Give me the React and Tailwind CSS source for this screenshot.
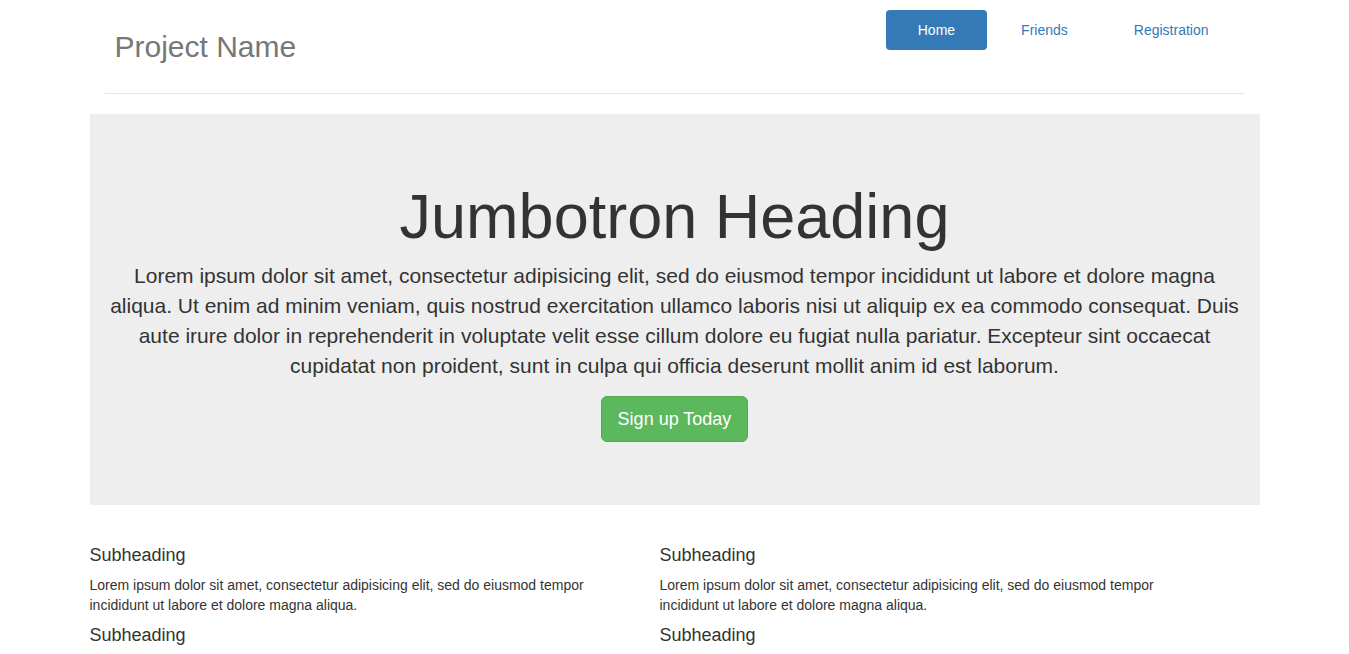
export default function App() {
  const lorem =
    'Lorem ipsum dolor sit amet, consectetur adipisicing elit, sed do eiusmod tempor incididunt ut labore et dolore magna aliqua.'
  const cols = [
    [lorem, lorem],
    [lorem, lorem],
  ]

  return (
    <div className="min-h-screen bg-white text-[#333] text-[14px] leading-[20px]" style={{ fontFamily: '"Liberation Sans", Arial, sans-serif' }}>
      <div className="w-[1170px] mx-auto">
        {/* header */}
        <div className="mx-[15px] pt-[10px] pb-[20px] border-b border-[#e5e5e5] flex justify-between items-start">
          <h3 className="mt-[20px] mb-[10px] pl-[10px] text-[30px] leading-[33px] text-[#777]">Project Name</h3>
          <ul className="flex gap-[2px] mr-[4px]">
            <li>
              <a href="#" className="block px-[32px] py-[10px] rounded-[4px] bg-[#337ab7] text-white">Home</a>
            </li>
            <li>
              <a href="#" className="block px-[32px] py-[10px] rounded-[4px] text-[#337ab7]">Friends</a>
            </li>
            <li>
              <a href="#" className="block px-[32px] py-[10px] rounded-[4px] text-[#337ab7]">Registration</a>
            </li>
          </ul>
        </div>

        {/* jumbotron */}
        <div className="mt-[20px] bg-[#eee] px-[15px] pt-[48px] pb-[48px] text-center">
          <h1 className="mt-[20px] mb-[10px] text-[63px] leading-[69px]">Jumbotron Heading</h1>
          <p className="mb-[15px] text-[21px] leading-[30px]">
            Lorem ipsum dolor sit amet, consectetur adipisicing elit, sed do eiusmod tempor incididunt ut labore et dolore magna aliqua. Ut enim ad minim veniam, quis nostrud exercitation ullamco laboris nisi ut aliquip ex ea commodo consequat. Duis aute irure dolor in reprehenderit in voluptate velit esse cillum dolore eu fugiat nulla pariatur. Excepteur sint occaecat cupidatat non proident, sunt in culpa qui officia deserunt mollit anim id est laborum.
          </p>
          <p className="mb-[15px]">
            <a href="#" className="inline-block px-[16px] py-[10px] text-[18px] leading-[24px] text-white bg-[#5cb85c] border border-[#4cae4c] rounded-[6px]">Sign up Today</a>
          </p>
        </div>

        {/* marketing */}
        <div className="mt-[40px] grid grid-cols-[570px_570px]">
          {cols.map((col, i) => (
            <div key={i}>
              {col.map((t, j) => (
                <div key={j}>
                  <h4 className="text-[18px] leading-[20px] mb-[10px]">Subheading</h4>
                  <p className="mb-[10px] w-[520px]">{t}</p>
                </div>
              ))}
            </div>
          ))}
        </div>
      </div>
    </div>
  )
}
